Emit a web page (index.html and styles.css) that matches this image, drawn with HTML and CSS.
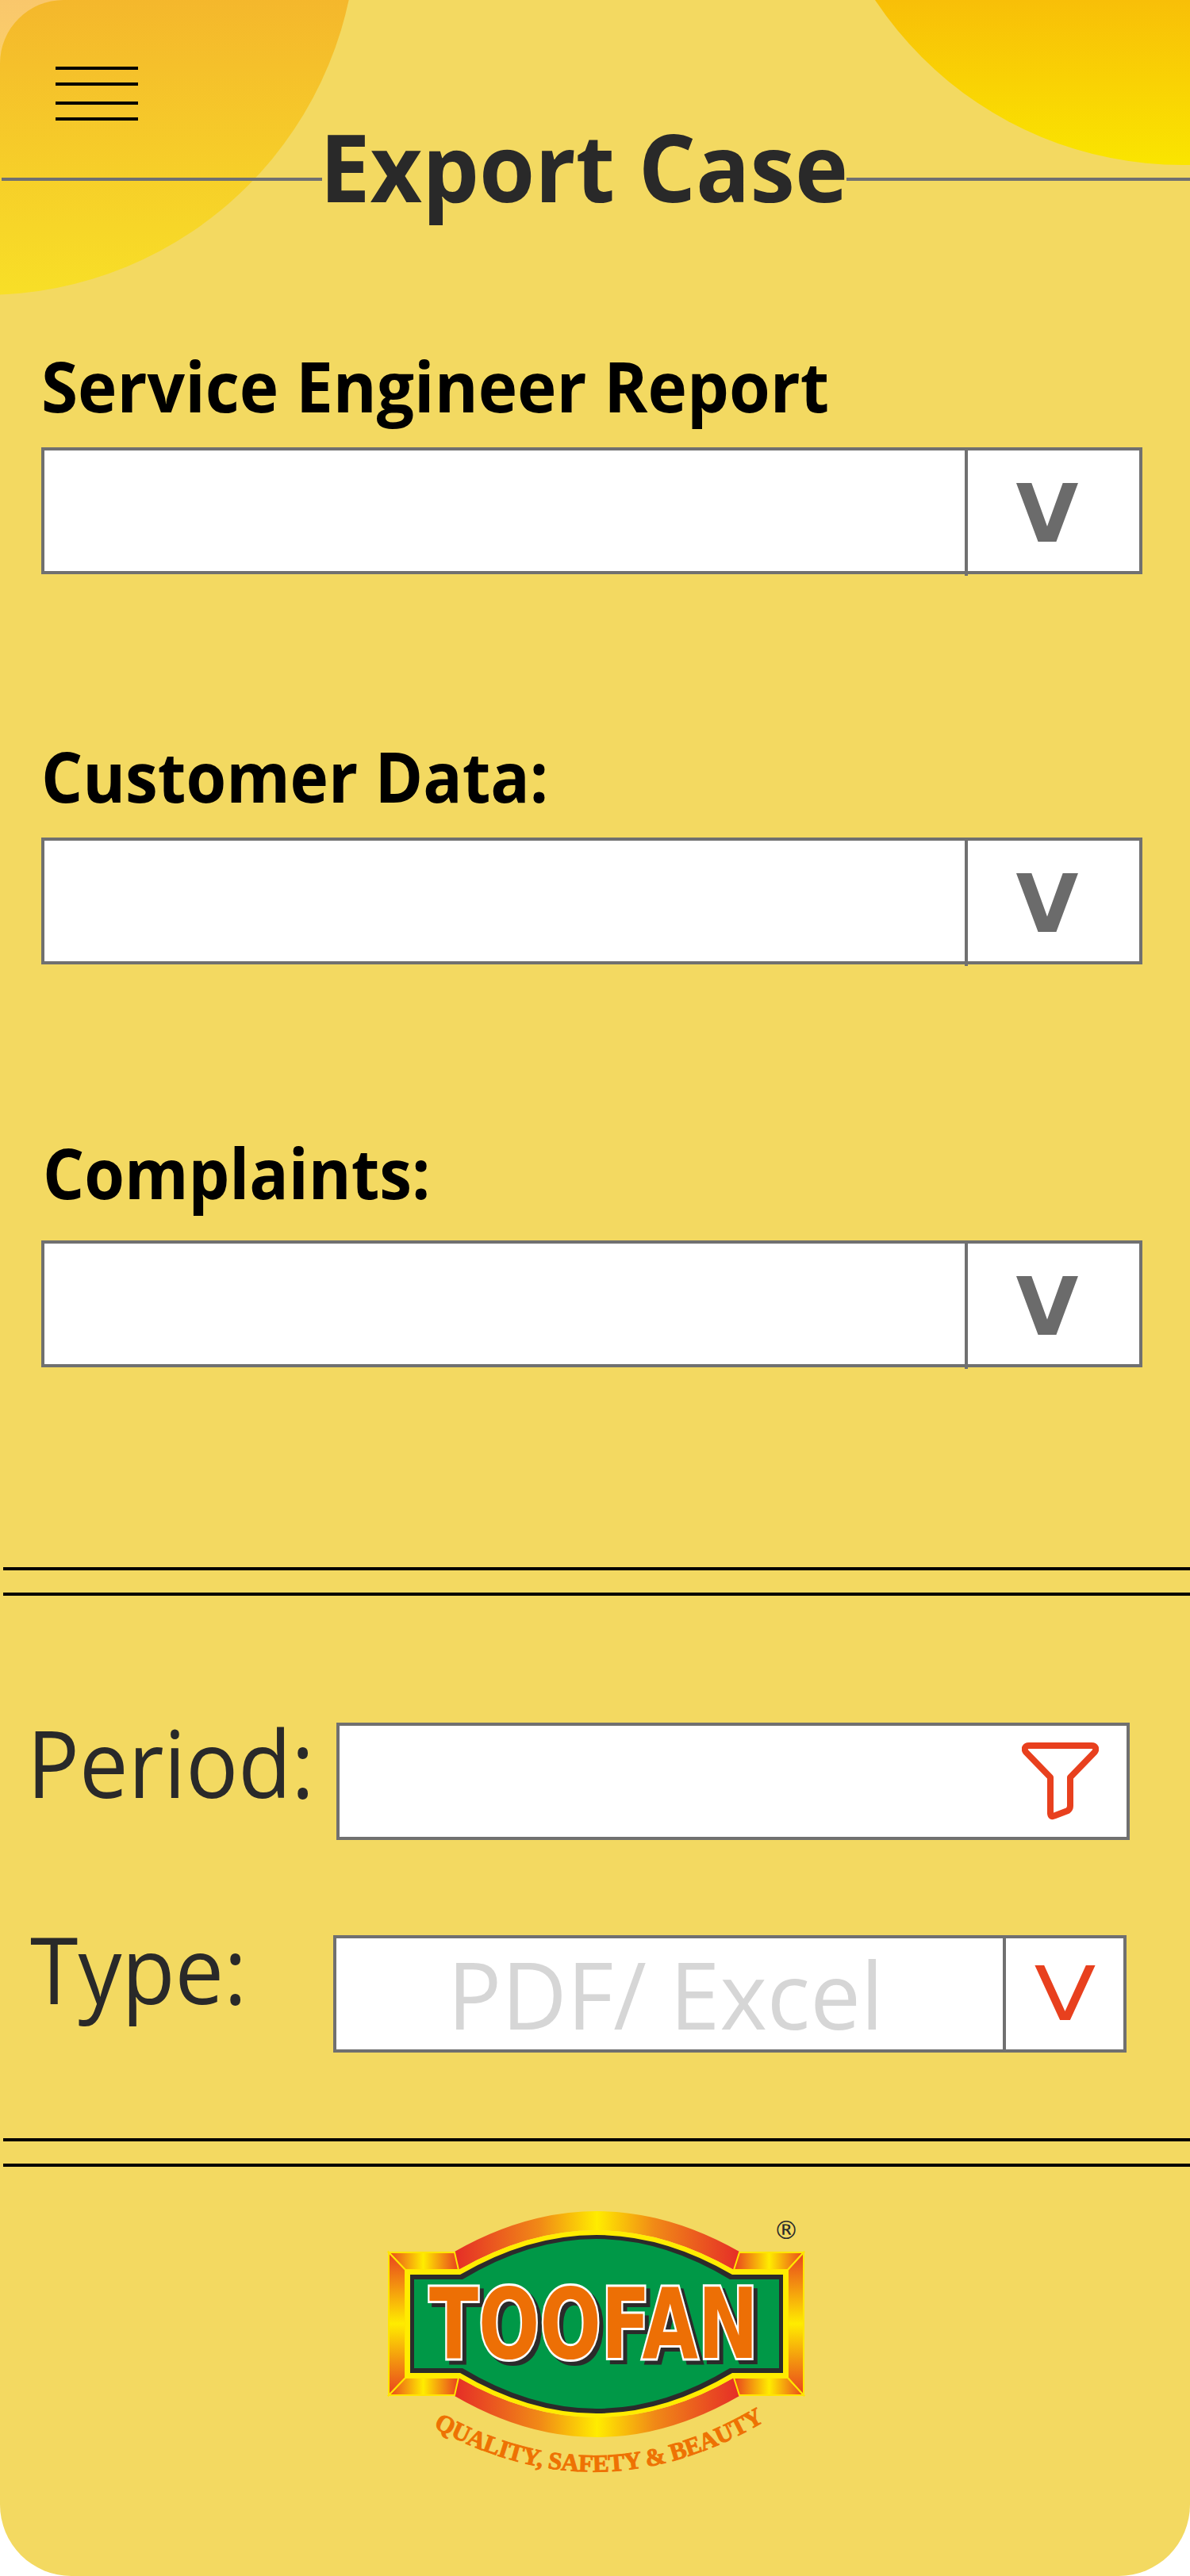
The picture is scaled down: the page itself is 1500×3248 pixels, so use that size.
FILE: index.html
```html
<!DOCTYPE html>
<html lang="en">
<head>
<meta charset="utf-8">
<title>Export Case</title>
<link rel="stylesheet" href="styles.css">
</head>
<body>
<div class="page">
  <main class="screen">
    <div class="blob blob-left"></div>
    <div class="blob blob-right"></div>

    <header class="header">
      <div class="menu" aria-label="Menu">
        <span class="menu-line"></span>
        <span class="menu-line"></span>
        <span class="menu-line menu-line-far"></span>
        <span class="menu-line"></span>
      </div>
      <div class="title-row">
        <span class="title-line title-line-left"></span>
        <h1 class="title"><span class="squeeze">Export Case</span></h1>
        <span class="title-line"></span>
      </div>
    </header>

    <section class="field field-first">
      <h2 class="field-label"><span class="squeeze">Service Engineer Report</span></h2>
      <div class="select">
        <div class="select-value"></div>
        <div class="caret">V</div>
      </div>
    </section>

    <section class="field field-second">
      <h2 class="field-label"><span class="squeeze squeeze-tight">Customer Data:</span></h2>
      <div class="select">
        <div class="select-value"></div>
        <div class="caret">V</div>
      </div>
    </section>

    <section class="field field-third">
      <h2 class="field-label"><span class="squeeze squeeze-tight squeeze-inset">Complaints:</span></h2>
      <div class="select select-roomy">
        <div class="select-value"></div>
        <div class="caret">V</div>
      </div>
    </section>

    <div class="rules rules-first"><span class="rule"></span><span class="rule"></span></div>

    <section class="row row-period">
      <div class="row-label row-label-period"><span class="squeeze squeeze-more">Period:</span></div>
      <div class="row-box">
        <svg class="filter" viewBox="0 0 97 98" aria-hidden="true">
          <path d="M9 4H88C93 4 94.500 8 92 12L61 44V80C61 83 60 84.500 58 86L41 92.500C38 94 36 93 36 89V44L5 12C2.500 8 4 4 9 4Z" fill="none" stroke="#e8401e" stroke-width="8" stroke-linejoin="round"/>
        </svg>
      </div>
    </section>

    <section class="row row-type">
      <div class="row-label row-label-type"><span class="squeeze squeeze-more">Type:</span></div>
      <div class="row-box row-box-select">
        <div class="type-value"><span class="squeeze">PDF/ Excel</span></div>
        <div class="type-caret"><span class="widen">V</span></div>
      </div>
    </section>

    <div class="rules rules-second"><span class="rule"></span><span class="rule"></span></div>

    <svg class="logo" viewBox="480 2780 560 360" role="img" aria-label="Toofan logo">
      <defs>
        <linearGradient id="arch" gradientUnits="userSpaceOnUse" x1="573" y1="0" x2="932" y2="0">
          <stop offset="0" stop-color="#e52d27"/>
          <stop offset=".3" stop-color="#f18a16"/>
          <stop offset=".5" stop-color="#ffec00"/>
          <stop offset=".7" stop-color="#f18a16"/>
          <stop offset="1" stop-color="#e52d27"/>
        </linearGradient>
        <linearGradient id="capL" gradientUnits="userSpaceOnUse" x1="489" y1="0" x2="578" y2="0">
          <stop offset="0" stop-color="#e8401e"/>
          <stop offset=".5" stop-color="#ffec00"/>
          <stop offset="1" stop-color="#e8401e"/>
        </linearGradient>
        <linearGradient id="capR" gradientUnits="userSpaceOnUse" x1="925" y1="0" x2="1014" y2="0">
          <stop offset="0" stop-color="#e8401e"/>
          <stop offset=".5" stop-color="#ffec00"/>
          <stop offset="1" stop-color="#e8401e"/>
        </linearGradient>
        <linearGradient id="side" gradientUnits="userSpaceOnUse" x1="0" y1="2839" x2="0" y2="3021">
          <stop offset="0" stop-color="#e8401e"/>
          <stop offset=".5" stop-color="#ffec00"/>
          <stop offset="1" stop-color="#e8401e"/>
        </linearGradient>
        <path id="tagline-path" d="M546 3060Q750 3174 955 3058"/>
      </defs>
      <path d="M573 2839Q752 2737 932 2839L925 2862Q752 2762 578 2862Z" fill="url(#arch)"/>
      <path d="M573 3021Q752 3125 932 3021L925 2998Q752 3098 578 2998Z" fill="url(#arch)"/>
      <g stroke="#ffe600" stroke-width="2">
        <path d="M490 2840H573L578 2862H511Z" fill="url(#capL)"/>
        <path d="M490 3020H573L578 2998H511Z" fill="url(#capL)"/>
        <path d="M1013 2840H932L925 2862H993Z" fill="url(#capR)"/>
        <path d="M1013 3020H932L925 2998H993Z" fill="url(#capR)"/>
        <path d="M490 2840L511 2862V2998L490 3020Z" fill="url(#side)"/>
        <path d="M1013 2840L993 2862V2998L1013 3020Z" fill="url(#side)"/>
      </g>
      <path d="M511 2862H578Q752 2762 925 2862H993V2998H925Q752 3098 578 2998H511Z" fill="#ffec00"/>
      <path d="M517 2868H580Q752 2768 923 2868H987V2992H923Q752 3094 580 2992H517Z" fill="#2b2b2b"/>
      <path d="M522 2874H583Q752 2772 920 2874H982V2986H920Q752 3088 583 2986H522Z" fill="#009847"/>
      <text class="logo-name" x="541" y="2973" textLength="415" lengthAdjust="spacingAndGlyphs">TOOFAN</text>
      <text class="logo-tagline"><textPath href="#tagline-path" textLength="440" lengthAdjust="spacing">QUALITY, SAFETY &amp; BEAUTY</textPath></text>
      <text class="logo-mark" x="991" y="2823" text-anchor="middle">®</text>
    </svg>
  </main>
</div>
</body>
</html>
```

FILE: styles.css
```css
* {
  box-sizing: border-box;
}

html,
body {
  margin: 0;
  padding: 0;
  background: #fff;
}

.page {
  width: 1500px;
  height: 3248px;
  overflow: hidden;
}

.screen {
  position: relative;
  height: 3248px;
  background: #f3d961;
  border-radius: 80px 80px 90px 90px;
  font-family: "Open Sans", "Noto Sans", sans-serif;
  display: flow-root;
}

.blob {
  position: absolute;
  border-radius: 50%;
}

.blob-left {
  left: -490px;
  top: -568px;
  width: 940px;
  height: 940px;
  opacity: 0.6;
  background: linear-gradient(180deg, #f5a109 60.4%, #fbe300 100%);
}

.blob-right {
  left: 1026px;
  top: -720px;
  width: 928px;
  height: 928px;
  background: linear-gradient(180deg, #f8bf08 77.6%, #fae500 100%);
}

.header {
  position: relative;
  padding-top: 84px;
}

.menu {
  margin-left: 70px;
  width: 104px;
  display: flex;
  flex-direction: column;
  gap: 16px;
}

.menu-line {
  display: block;
  height: 4px;
  background: #000;
}

.menu-line-far {
  margin-top: 4px;
}

.title-row {
  margin-top: 16px;
  display: flex;
  align-items: center;
}

.title-line {
  flex: 1;
  height: 4px;
  background: #707070;
}

.title-line-left {
  flex: 0 0 404px;
  margin-left: 2px;
}

.title {
  margin: 0 0 0 -3px;
  width: 664px;
  padding-bottom: 32px;
  font-size: 118px;
  line-height: 84px;
  font-weight: 700;
  color: #292929;
  white-space: nowrap;
}

.squeeze {
  display: inline-block;
  transform: scaleX(0.962);
  transform-origin: left center;
  white-space: nowrap;
}

.squeeze-more {
  transform: scaleX(0.93);
}

.squeeze-tight {
  transform: scaleX(0.942);
}

.squeeze-inset {
  margin-left: 2px;
}

.widen {
  display: inline-block;
  transform: scaleX(1.2);
}

.field {
  position: relative;
  margin-left: 52px;
  width: 1388px;
}

.field-first {
  margin-top: 152px;
}

.field-second {
  margin-top: 204px;
}

.field-third {
  margin-top: 212px;
}

.field-label {
  margin: 0;
  font-size: 87px;
  line-height: 100px;
  font-weight: 700;
  color: #000;
}

.select {
  margin-top: 28px;
  height: 160px;
  display: flex;
  background: #fff;
  border: 4px solid #707070;
}

.select-roomy {
  margin-top: 36px;
}

.select-value {
  width: 1160px;
}

.caret {
  flex: 1;
  margin-top: -4px;
  margin-bottom: -6px;
  padding-top: 5px;
  padding-right: 16px;
  border-left: 4px solid #707070;
  display: flex;
  align-items: center;
  justify-content: center;
  font-family: "DejaVu Sans", sans-serif;
  font-size: 102px;
  font-weight: 700;
  color: #6b6b6b;
}

.rules {
  position: relative;
  display: flex;
  flex-direction: column;
  gap: 28px;
  margin-left: 4px;
}

.rules-first {
  margin-top: 252px;
}

.rules-second {
  margin-top: 108px;
}

.rule {
  display: block;
  height: 4px;
  background: #000;
}

.row {
  position: relative;
  display: flex;
  align-items: flex-start;
  padding-left: 36px;
}

.row-period {
  margin-top: 160px;
}

.row-type {
  margin-top: 120px;
}

.row-label {
  height: 148px;
  font-size: 118px;
  line-height: 148px;
  color: #292929;
}

.row-label-period {
  width: 390px;
  margin-left: -2px;
  margin-top: -24px;
  margin-bottom: 24px;
}

.row-label-type {
  width: 382px;
  margin-left: 2px;
  margin-top: -32px;
  margin-bottom: 32px;
}

.row-box {
  width: 1000px;
  height: 148px;
  background: #fff;
  border: 4px solid #707070;
  display: flex;
  align-items: center;
  justify-content: flex-end;
  padding-right: 35px;
}

.row-box-select {
  padding-right: 0;
  align-items: stretch;
}

.filter {
  width: 97px;
  height: 98px;
}

.type-value {
  flex: 1;
  padding-left: 140px;
  font-size: 118px;
  line-height: 140px;
  color: #d6d6d6;
  white-space: nowrap;
}

.type-caret {
  width: 152px;
  border-left: 4px solid #707070;
  display: flex;
  align-items: center;
  justify-content: center;
  font-family: "DejaVu Sans", sans-serif;
  font-size: 95px;
  color: #e8401e;
}

.logo {
  position: relative;
  display: block;
  margin: 48px 0 0 480px;
  width: 560px;
  height: 360px;
}

.logo-name {
  font-family: "DejaVu Sans", sans-serif;
  font-size: 123px;
  font-weight: 700;
  fill: #ed6f05;
  stroke: #fff;
  stroke-width: 6px;
  paint-order: stroke;
  filter: drop-shadow(5px 5px 0 #2b2b2b);
}

.logo-tagline {
  font-family: "Liberation Serif", serif;
  font-size: 31px;
  font-weight: 700;
  fill: #ee7203;
  stroke: #ee7203;
  stroke-width: 1px;
}

.logo-mark {
  font-family: "DejaVu Sans", sans-serif;
  font-size: 32px;
  fill: #2b2b2b;
}
```
